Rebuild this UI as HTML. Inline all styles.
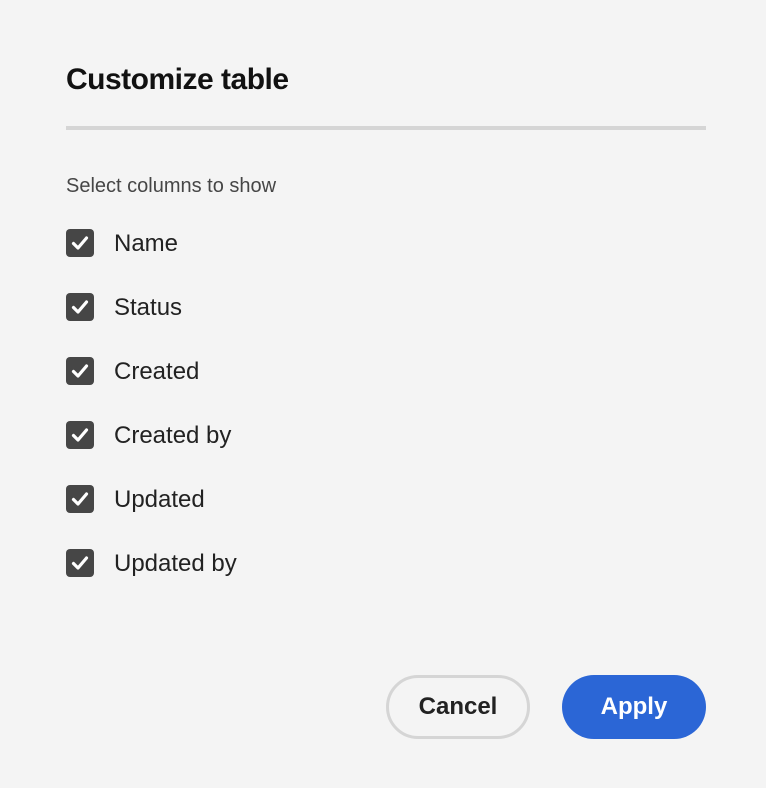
<!DOCTYPE html>
<html><head><style>
body{margin:0;width:766px;height:788px;background:#f4f4f4;font-family:"Liberation Sans",sans-serif;position:relative;overflow:hidden}
.t{position:absolute;left:66px;top:63px;font-size:30px;font-weight:bold;color:#111;letter-spacing:-0.5px}
.hr{position:absolute;left:66px;top:126px;width:640px;height:4px;background:#d5d5d5}
.s{position:absolute;left:66px;top:175px;font-size:20px;color:#464646}
.row{position:absolute;left:66px;height:28px;display:flex;align-items:center}
.cb{width:28px;height:28px;background:#464646;border-radius:4px;display:flex;align-items:center;justify-content:center}
.row span{margin-left:20px;font-size:24px;color:#222;position:relative;top:1px}
.btn{position:absolute;top:675px;width:144px;height:64px;box-sizing:border-box;border-radius:32px;font-size:24px;font-weight:bold;display:flex;align-items:center;justify-content:center}
</style></head><body>
<div class="t">Customize table</div>
<div class="hr"></div>
<div class="s">Select columns to show</div>
<div class="row" style="top:229px"><div class="cb"><svg width="20" height="20" viewBox="0 0 20 20"><path d="M3.5 10.5l4.5 4.5 8.5-10" stroke="#fff" stroke-width="3.2" fill="none" stroke-linecap="round" stroke-linejoin="round"/></svg></div><span>Name</span></div>
<div class="row" style="top:293px"><div class="cb"><svg width="20" height="20" viewBox="0 0 20 20"><path d="M3.5 10.5l4.5 4.5 8.5-10" stroke="#fff" stroke-width="3.2" fill="none" stroke-linecap="round" stroke-linejoin="round"/></svg></div><span>Status</span></div>
<div class="row" style="top:357px"><div class="cb"><svg width="20" height="20" viewBox="0 0 20 20"><path d="M3.5 10.5l4.5 4.5 8.5-10" stroke="#fff" stroke-width="3.2" fill="none" stroke-linecap="round" stroke-linejoin="round"/></svg></div><span>Created</span></div>
<div class="row" style="top:421px"><div class="cb"><svg width="20" height="20" viewBox="0 0 20 20"><path d="M3.5 10.5l4.5 4.5 8.5-10" stroke="#fff" stroke-width="3.2" fill="none" stroke-linecap="round" stroke-linejoin="round"/></svg></div><span>Created by</span></div>
<div class="row" style="top:485px"><div class="cb"><svg width="20" height="20" viewBox="0 0 20 20"><path d="M3.5 10.5l4.5 4.5 8.5-10" stroke="#fff" stroke-width="3.2" fill="none" stroke-linecap="round" stroke-linejoin="round"/></svg></div><span>Updated</span></div>
<div class="row" style="top:549px"><div class="cb"><svg width="20" height="20" viewBox="0 0 20 20"><path d="M3.5 10.5l4.5 4.5 8.5-10" stroke="#fff" stroke-width="3.2" fill="none" stroke-linecap="round" stroke-linejoin="round"/></svg></div><span>Updated by</span></div>
<div class="btn" style="left:386px;border:3px solid #d5d5d5;color:#222">Cancel</div>
<div class="btn" style="left:562px;background:#2b66d6;color:#fff">Apply</div>
</body></html>
